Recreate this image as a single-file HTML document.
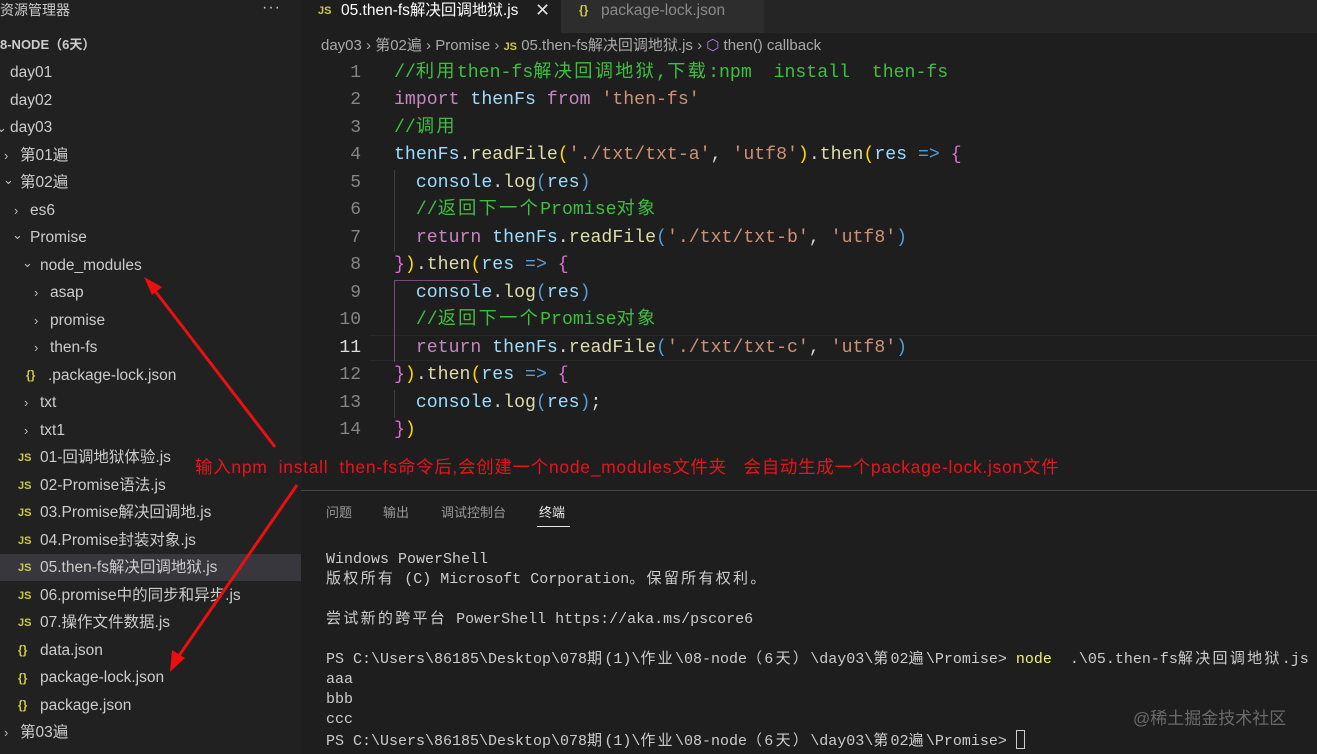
<!DOCTYPE html>
<html><head><meta charset="utf-8"><style>
*{margin:0;padding:0;box-sizing:border-box}
body{width:1317px;height:754px;background:#1e1e1e;overflow:hidden;position:relative;font-family:"Liberation Sans","Noto Sans CJK SC",sans-serif;color:#ccc}
.side{position:absolute;left:0;top:0;width:301px;height:754px;background:#212121}
.r{position:absolute;font-size:15.5px;color:#cccccc;white-space:nowrap;line-height:20px}
.chev{position:absolute;font-size:13px;color:#bbb;line-height:20px}
.js{position:absolute;font-size:11px;font-weight:bold;color:#cbcb41;line-height:20px}
.br{position:absolute;font-size:12px;font-weight:bold;color:#cbcb41;line-height:20px}
.code{position:absolute;left:394px;font-family:"Liberation Mono","Noto Sans CJK SC",monospace;font-size:18.2px;white-space:pre;line-height:22px}
.ln{position:absolute;width:60px;left:301px;text-align:right;font-family:"Liberation Mono",monospace;font-size:18px;color:#858585;line-height:22px}
.c{color:#3fbf3f}.k{color:#c586c0}.v{color:#9cdcfe}.f{color:#dcdcaa}.s{color:#ce9178}.p{color:#d4d4d4}.y{color:#ffd700}.m{color:#da70d6}.b{color:#569cd6}
.w{letter-spacing:2.3px}
.t{position:absolute;left:326px;font-family:"Liberation Mono","Noto Sans CJK SC",monospace;font-size:15px;white-space:pre;color:#ccc;line-height:20px}
</style></head><body>
<div class="side">
<div class="r" style="left:0;top:0;font-size:14px">资源管理器</div>
<div class="r" style="left:262px;top:-2px;font-size:16px;letter-spacing:1px">···</div>
<div class="r" style="left:0;top:35px;font-size:13px;font-weight:bold">8-NODE（6天）</div>
<div class="r" style="left:10px;top:63px">day01</div>
<div class="r" style="left:10px;top:91px">day02</div>
<div class="chev" style="left:-4px;top:118px">⌄</div><div class="r" style="left:10px;top:118px">day03</div>
<div class="chev" style="left:4px;top:146px">›</div><div class="r" style="left:20px;top:146px">第01遍</div>
<div class="chev" style="left:3px;top:170px">⌄</div><div class="r" style="left:20px;top:173px">第02遍</div>
<div class="chev" style="left:14px;top:201px">›</div><div class="r" style="left:30px;top:201px">es6</div>
<div class="chev" style="left:12px;top:225px">⌄</div><div class="r" style="left:30px;top:228px">Promise</div>
<div class="chev" style="left:22px;top:253px">⌄</div><div class="r" style="left:40px;top:256px">node_modules</div>
<div class="chev" style="left:34px;top:283px">›</div><div class="r" style="left:50px;top:283px">asap</div>
<div class="chev" style="left:34px;top:311px">›</div><div class="r" style="left:50px;top:311px">promise</div>
<div class="chev" style="left:34px;top:338px">›</div><div class="r" style="left:50px;top:338px">then-fs</div>
<div class="br" style="left:26px;top:365px">{}</div><div class="r" style="left:48px;top:366px">.package-lock.json</div>
<div class="chev" style="left:24px;top:393px">›</div><div class="r" style="left:40px;top:393px">txt</div>
<div class="chev" style="left:24px;top:421px">›</div><div class="r" style="left:40px;top:421px">txt1</div>
<div style="position:absolute;left:0;top:554px;width:301px;height:27px;background:#37373d"></div>
<div class="js" style="left:18px;top:448px">JS</div><div class="r" style="left:40px;top:448px">01-回调地狱体验.js</div>
<div class="js" style="left:18px;top:476px">JS</div><div class="r" style="left:40px;top:476px">02-Promise语法.js</div>
<div class="js" style="left:18px;top:503px">JS</div><div class="r" style="left:40px;top:503px">03.Promise解决回调地.js</div>
<div class="js" style="left:18px;top:531px">JS</div><div class="r" style="left:40px;top:531px">04.Promise封装对象.js</div>
<div class="js" style="left:18px;top:558px">JS</div><div class="r" style="left:40px;top:558px">05.then-fs解决回调地狱.js</div>
<div class="js" style="left:18px;top:586px">JS</div><div class="r" style="left:40px;top:586px">06.promise中的同步和异步.js</div>
<div class="js" style="left:18px;top:613px">JS</div><div class="r" style="left:40px;top:613px">07.操作文件数据.js</div>
<div class="br" style="left:18px;top:640px">{}</div><div class="r" style="left:40px;top:641px">data.json</div>
<div class="br" style="left:18px;top:668px">{}</div><div class="r" style="left:40px;top:668px">package-lock.json</div>
<div class="br" style="left:18px;top:695px">{}</div><div class="r" style="left:40px;top:696px">package.json</div>
<div class="chev" style="left:4px;top:723px">›</div><div class="r" style="left:20px;top:723px">第03遍</div>
</div>
<div style="position:absolute;left:301px;top:0;width:1016px;height:33px;background:#252526"></div>
<div style="position:absolute;left:301px;top:0;width:260px;height:33px;background:#1e1e1e"></div>
<div style="position:absolute;left:561px;top:0;width:203px;height:33px;background:#2d2d2d"></div>
<div class="js" style="left:318px;top:1px">JS</div><div class="r" style="left:341px;top:1px;color:#fff">05.then-fs解决回调地狱.js</div>
<div class="r" style="left:535px;top:0;font-size:18px;color:#ddd">✕</div>
<div class="br" style="left:579px;top:0">{}</div><div class="r" style="left:601px;top:1px;color:#8a8a8a">package-lock.json</div>
<div class="r" style="left:321px;top:36px;font-size:15px;color:#a9a9a9">day03 › 第02遍 › Promise › <span style="color:#cbcb41;font-size:11px;font-weight:bold">JS</span> 05.then-fs解决回调地狱.js › <span style="color:#b180d7">⬡</span> then() callback</div>
<div style="position:absolute;left:370px;top:335px;width:947px;height:26px;border-top:1px solid #282828;border-bottom:1px solid #282828"></div>
<div style="position:absolute;left:394px;top:170px;width:1px;height:82px;background:#404040"></div>
<div style="position:absolute;left:394px;top:280px;width:1px;height:82px;background:#7a4a7a"></div>
<div style="position:absolute;left:394px;top:280px;width:86px;height:1px;background:#7a4a7a"></div>
<div style="position:absolute;left:394px;top:390px;width:1px;height:28px;background:#404040"></div>
<div class="ln" style="top:62px">1</div><div class="ln" style="top:89px">2</div><div class="ln" style="top:117px">3</div><div class="ln" style="top:144px">4</div><div class="ln" style="top:172px">5</div><div class="ln" style="top:199px">6</div><div class="ln" style="top:227px">7</div><div class="ln" style="top:254px">8</div><div class="ln" style="top:282px">9</div><div class="ln" style="top:309px">10</div><div class="ln" style="top:337px;color:#ddd">11</div><div class="ln" style="top:364px">12</div><div class="ln" style="top:392px">13</div><div class="ln" style="top:419px">14</div>
<div class="code" style="top:62px"><span class="c">//<span class="w">利用</span>then-fs<span class="w">解决回调地狱</span>,<span class="w">下载</span>:npm  install  then-fs</span></div>
<div class="code" style="top:89px"><span class="k">import</span> <span class="v">thenFs</span> <span class="k">from</span> <span class="s">'then-fs'</span></div>
<div class="code" style="top:117px"><span class="c">//<span class="w">调用</span></span></div>
<div class="code" style="top:144px"><span class="v">thenFs</span><span class="p">.</span><span class="f">readFile</span><span class="y">(</span><span class="s">'./txt/txt-a'</span><span class="p">, </span><span class="s">'utf8'</span><span class="y">)</span><span class="p">.</span><span class="f">then</span><span class="y">(</span><span class="v">res</span> <span class="b">=&gt;</span> <span class="m">{</span></div>
<div class="code" style="top:172px">  <span class="v">console</span><span class="p">.</span><span class="f">log</span><span class="b">(</span><span class="v">res</span><span class="b">)</span></div>
<div class="code" style="top:199px">  <span class="c">//<span class="w">返回下一个</span>Promise<span class="w">对象</span></span></div>
<div class="code" style="top:227px">  <span class="k">return</span> <span class="v">thenFs</span><span class="p">.</span><span class="f">readFile</span><span class="b">(</span><span class="s">'./txt/txt-b'</span><span class="p">, </span><span class="s">'utf8'</span><span class="b">)</span></div>
<div class="code" style="top:254px"><span class="m">}</span><span class="y">)</span><span class="p">.</span><span class="f">then</span><span class="y">(</span><span class="v">res</span> <span class="b">=&gt;</span> <span class="m">{</span></div>
<div class="code" style="top:282px">  <span class="v">console</span><span class="p">.</span><span class="f">log</span><span class="b">(</span><span class="v">res</span><span class="b">)</span></div>
<div class="code" style="top:309px">  <span class="c">//<span class="w">返回下一个</span>Promise<span class="w">对象</span></span></div>
<div class="code" style="top:337px">  <span class="k">return</span> <span class="v">thenFs</span><span class="p">.</span><span class="f">readFile</span><span class="b">(</span><span class="s">'./txt/txt-c'</span><span class="p">, </span><span class="s">'utf8'</span><span class="b">)</span></div>
<div class="code" style="top:364px"><span class="m">}</span><span class="y">)</span><span class="p">.</span><span class="f">then</span><span class="y">(</span><span class="v">res</span> <span class="b">=&gt;</span> <span class="m">{</span></div>
<div class="code" style="top:392px">  <span class="v">console</span><span class="p">.</span><span class="f">log</span><span class="b">(</span><span class="v">res</span><span class="b">)</span><span class="p">;</span></div>
<div class="code" style="top:419px"><span class="m">}</span><span class="y">)</span></div>
<div class="r" style="left:195px;top:457px;font-size:17.5px;letter-spacing:0.7px;color:#e8141b">输入npm&nbsp; install&nbsp; then-fs命令后,会创建一个node_modules文件夹&nbsp;&nbsp; 会自动生成一个package-lock.json文件</div>
<div style="position:absolute;left:301px;top:490px;width:1016px;height:1px;background:#444"></div>
<div class="r" style="left:326px;top:503px;font-size:13px;color:#999">问题</div>
<div class="r" style="left:383px;top:503px;font-size:13px;color:#999">输出</div>
<div class="r" style="left:441px;top:503px;font-size:13px;color:#999">调试控制台</div>
<div class="r" style="left:539px;top:503px;font-size:13px;color:#e7e7e7">终端</div>
<div style="position:absolute;left:537px;top:526px;width:33px;height:1px;background:#e7e7e7"></div>
<div class="t" style="top:550px">Windows PowerShell</div>
<div class="t" style="top:570px"><span class="w">版权所有</span> (C) Microsoft Corporation<span class="w">。保留所有权利。</span></div>
<div class="t" style="top:610px"><span class="w">尝试新的跨平台</span> PowerShell https://aka.ms/pscore6</div>
<div class="t" style="top:650px">PS C:\Users\86185\Desktop\078<span class="w">期</span>(1)\<span class="w">作业</span>\08-node<span class="w">（6天）</span>\day03\<span class="w">第</span>02<span class="w">遍</span>\Promise&gt; <span style="color:#f0f080">node</span>  .\05.then-fs<span class="w">解决回调地狱</span>.js</div>
<div class="t" style="top:670px">aaa</div>
<div class="t" style="top:690px">bbb</div>
<div class="t" style="top:710px">ccc</div>
<div class="t" style="top:730px">PS C:\Users\86185\Desktop\078<span class="w">期</span>(1)\<span class="w">作业</span>\08-node<span class="w">（6天）</span>\day03\<span class="w">第</span>02<span class="w">遍</span>\Promise&gt; <span style="display:inline-block;width:9px;height:19px;border:1px solid #ccc;vertical-align:-4px"></span></div>
<div class="r" style="left:1133px;top:709px;font-size:17px;color:#6a6a6a">@稀土掘金技术社区</div>
<svg style="position:absolute;left:0;top:0" width="1317" height="754">
<g stroke="#e81010" stroke-width="3" fill="#e81010">
<line x1="275" y1="447" x2="152" y2="287"/>
<polygon points="144,277 162,287 152,295" stroke="none"/>
<line x1="297" y1="485" x2="176" y2="660"/>
<polygon points="170,672 172,650 185,658" stroke="none"/>
</g></svg>
</body></html>
